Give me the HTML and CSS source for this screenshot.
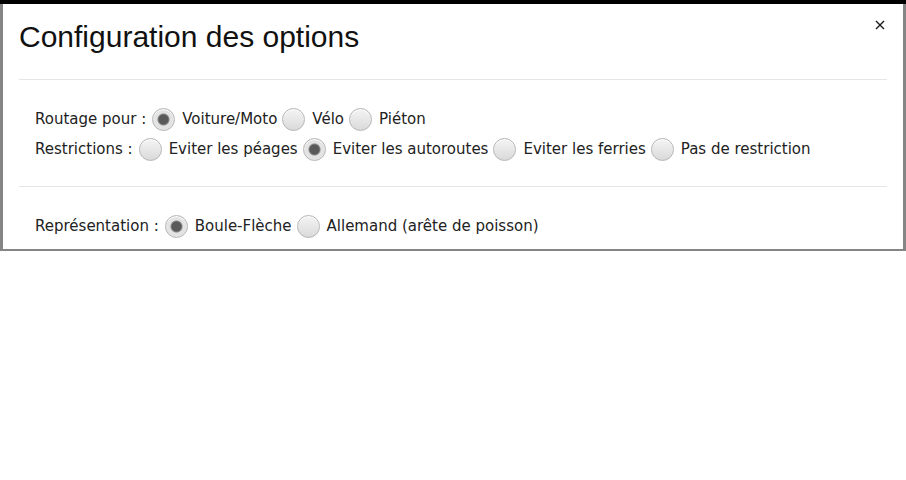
FILE: index.html
```html
<!DOCTYPE html>
<html lang="fr">
<head>
<meta charset="utf-8">
<title>Configuration des options</title>
<link rel="stylesheet" href="styles.css">
</head>
<body>
<div class="stage">
  <div class="modal">
    <div class="modal-header">
      <h4 class="modal-title">Configuration des options</h4>
      <button class="close" type="button" aria-label="Fermer">
        <svg width="10" height="10" viewBox="0 0 10 10"><path d="M1 1L9 9M9 1L1 9" stroke="#1a1a1a" stroke-width="1.4" fill="none"/></svg>
      </button>
    </div>
    <div class="modal-section">
      <div class="row">
        <span class="lbl">Routage pour :</span>
        <label class="opt"><input type="radio" name="routage" checked><span>Voiture/Moto</span></label>
        <label class="opt"><input type="radio" name="routage"><span>Vélo</span></label>
        <label class="opt"><input type="radio" name="routage"><span>Piéton</span></label>
      </div>
      <div class="row">
        <span class="lbl">Restrictions :</span>
        <label class="opt"><input type="radio" name="restr"><span>Eviter les péages</span></label>
        <label class="opt"><input type="radio" name="restr" checked><span>Eviter les autoroutes</span></label>
        <label class="opt"><input type="radio" name="restr"><span>Eviter les ferries</span></label>
        <label class="opt"><input type="radio" name="restr"><span>Pas de restriction</span></label>
      </div>
    </div>
    <div class="modal-section">
      <div class="row">
        <span class="lbl">Représentation :</span>
        <label class="opt"><input type="radio" name="repr" checked><span>Boule-Flèche</span></label>
        <label class="opt"><input type="radio" name="repr"><span>Allemand (arête de poisson)</span></label>
      </div>
    </div>
  </div>
</div>
</body>
</html>
```

FILE: styles.css
```css
html, body {
  margin: 0;
  padding: 0;
  background: #ffffff;
}

.stage {
  height: 251px;
  box-sizing: border-box;
  padding: 4px 3px 2px 3px;
  background: linear-gradient(to bottom, #000000 0, #000000 4px, #858585 4px);
}

.modal {
  height: 245px;
  background: #ffffff;
  overflow: hidden;
  padding: 0 16px;
}

.modal-header {
  position: relative;
  padding-top: 16px;
  height: 59px;
  border-bottom: 1px solid #e5e5e5;
}

.modal-title {
  margin: 0;
  font-family: "Liberation Sans", Arial, sans-serif;
  font-weight: normal;
  font-size: 30px;
  line-height: 33px;
  color: #111111;
}

.close {
  position: absolute;
  right: 2px;
  top: 16px;
  border: 0;
  background: transparent;
  padding: 0;
  width: 10px;
  height: 10px;
  line-height: 0;
  cursor: pointer;
}

.modal-section {
  padding: 24px 0 22px 16px;
  border-bottom: 1px solid #e5e5e5;
}

.modal-section:last-child {
  border-bottom: 0;
}

.row {
  display: flex;
  align-items: center;
  gap: 5px;
  height: 30px;
  font-family: "DejaVu Sans", Verdana, sans-serif;
  font-size: 15px;
  color: #222222;
}

.lbl {
  margin-right: 1px;
}

.opt {
  display: flex;
  align-items: center;
  gap: 7px;
  cursor: pointer;
}

.opt input {
  appearance: none;
  -webkit-appearance: none;
  margin: 0;
  width: 23px;
  height: 23px;
  border-radius: 50%;
  border: 1px solid #b5b5b5;
  box-sizing: border-box;
  background: linear-gradient(to bottom, #f4f4f4, #dadada);
  box-shadow: inset 0 1px 0 #ffffff;
}

.opt input:checked {
  background: radial-gradient(circle, #5a5a5a 0, #5a5a5a 4.5px, #8a8a8a 5.5px, #e2e2e2 6.5px, #e8e8e8 100%);
}
```
